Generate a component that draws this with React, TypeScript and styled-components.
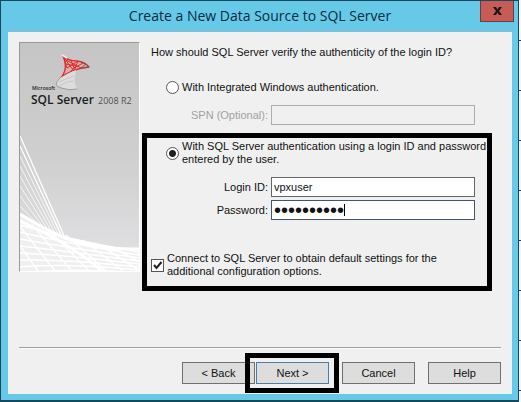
import React from "react";
import styled, { createGlobalStyle } from "styled-components";

const GlobalStyle = createGlobalStyle`
  *, *::before, *::after { box-sizing: border-box; }
  body {
    margin: 0;
    background: #ffffff;
    color: #111111;
    font: 11px/13px "Liberation Sans", Arial, sans-serif;
  }
`;

const Desktop = styled.div`
  display: flex;
`;

const Backdrop = styled.div`
  width: 2px;
  background: repeating-linear-gradient(#f4f8fa 0 40px, #1d4054 40px 41px, #f4f8fa 41px 50px);
`;

const Window = styled.main`
  flex: 1;
  min-width: 0;
  border: 1px solid #17485e;
  border-bottom-width: 2px;
  background: #67c9e8;
  padding: 0 6px 6px 7px;
`;

const TitleBar = styled.header`
  position: relative;
  height: 30px;
  display: flex;
  align-items: center;
  justify-content: center;
`;

const Title = styled.h1`
  margin: 0;
  color: #0c2c42;
  font: 400 14px/20px "Open Sans", "Noto Sans", sans-serif;
`;

const CloseButton = styled.button`
  position: absolute;
  top: 0;
  right: -2px;
  width: 34px;
  height: 21px;
  padding: 0;
  display: grid;
  place-items: center;
  border: 1px solid #6b3d42;
  border-top: 0;
  background: #c75b55;
`;

const Client = styled.form`
  background: #f0f0f0;
  border-top: 1px solid #8fb9c9;
  padding: 10px 11px;
`;

const Content = styled.div`
  display: grid;
  grid-template-columns: 121px minmax(0, 1fr);
  column-gap: 2px;
  align-items: start;
`;

const Banner = styled.div`
  height: 230px;
  border: 1px solid #999999;
  border-right-color: #ffffff;
  border-bottom-color: #ffffff;
  overflow: hidden;
  svg { display: block; width: 100%; height: 100%; }
`;

const Settings = styled.div`
  padding-right: 9px;
`;

const Question = styled.p`
  margin: 0;
  padding: 4px 9px 0;
`;

const WindowsAuth = styled.section`
  display: grid;
  row-gap: 11px;
  padding: 22px 17px 8px 24px;
`;

const Marked = styled.section`
  border: 5px solid #000000;
  padding: 2px 0 8px 4px;
`;

const Choice = styled.label<{ $start?: number; $end?: number }>`
  display: flex;
  align-items: center;
  gap: 3px;
  padding-left: ${(p) => p.$start ?? 0}px;
  padding-right: ${(p) => p.$end ?? 0}px;
`;

const Radio = styled.input.attrs({ type: "radio" })`
  appearance: none;
  flex: none;
  width: 13px;
  height: 13px;
  margin: 0;
  border: 1px solid #555555;
  border-radius: 50%;
  background: #ffffff;
  &:checked {
    background: radial-gradient(circle, #202020 0 3px, #ffffff 4px);
  }
`;

const CheckCell = styled.span`
  position: relative;
  display: grid;
  flex: none;
  width: 13px;
  height: 13px;
  svg { position: absolute; inset: 0; pointer-events: none; }
`;

const Check = styled.input.attrs({ type: "checkbox" })`
  appearance: none;
  margin: 0;
  border: 1px solid #555555;
  background: #ffffff;
  &:not(:checked) + svg { display: none; }
`;

const Field = styled.div<{ $muted?: boolean }>`
  display: grid;
  grid-template-columns: minmax(0, 1fr) 204px;
  column-gap: 3px;
  align-items: center;
  text-align: right;
  color: ${(p) => (p.$muted ? "#a0a0a0" : "inherit")};
`;

const FieldGroup = styled.div`
  display: grid;
  row-gap: 3px;
  padding: 11px 12px 32px 0;
`;

const Entry = styled.span`
  position: relative;
  display: grid;
`;

const TextBox = styled.input<{ $focused?: boolean }>`
  width: 100%;
  height: 20px;
  margin: 0;
  padding: 0 2px;
  border: 1px solid ${(p) => (p.$focused ? "#40566e" : "#666666")};
  border-radius: 0;
  outline: 0;
  background: #ffffff;
  color: #111111;
  font: inherit;
  &[type="password"] { font-size: 20px; }
  &:disabled { background: #f0f0f0; border-color: #adadad; }
`;

const Caret = styled.span`
  position: absolute;
  left: 73px;
  top: 4px;
  width: 1px;
  height: 12px;
  background: #000000;
`;

const Divider = styled.hr`
  margin: 56px 0 13px;
  border: 0;
  border-top: 1px solid #a0a0a0;
  border-bottom: 1px solid #fafafa;
`;

const Actions = styled.footer`
  display: flex;
  justify-content: flex-end;
  gap: 13px;
`;

const Pair = styled.div`
  display: flex;
  gap: 1px;
`;

const Button = styled.button<{ $primary?: boolean }>`
  width: 73px;
  height: 22px;
  padding: 0;
  border: 1px solid ${(p) => (p.$primary ? "#4c7da5" : "#707070")};
  background: #dddddd;
  color: #111111;
  font: inherit;
`;

const Highlight = styled.span`
  position: relative;
  display: grid;
  &::after {
    content: "";
    position: absolute;
    inset: -9px -10px -9px -11px;
    border: 5px solid #000000;
    pointer-events: none;
  }
`;

const rays = Array.from({ length: 8 }, (_, i) => i);

function SqlServerBanner() {
  return (
    <svg viewBox="0 0 119 228" preserveAspectRatio="none" role="img" aria-label="Microsoft SQL Server 2008 R2">
      <defs>
        <linearGradient id="silver" x1="0" y1="0" x2="0" y2="1">
          <stop offset="0" stopColor="#c5c5c5" />
          <stop offset="0.5" stopColor="#cfcfcf" />
          <stop offset="1" stopColor="#e3e3e6" />
        </linearGradient>
        <linearGradient id="flag" x1="0" y1="0" x2="1" y2="0">
          <stop offset="0" stopColor="#dc2626" />
          <stop offset="0.6" stopColor="#dc3432" />
          <stop offset="1" stopColor="#8c4648" />
        </linearGradient>
      </defs>
      <rect width="119" height="228" fill="url(#silver)" />
      <g fill="none" stroke="url(#flag)" strokeLinejoin="round">
        <path d="M43 13 Q48 18 57 18 Q65 19 69 24 Q50 26 40 36 Q49 26 43 13Z" fill="#e79a98" fillOpacity=".6" strokeWidth="1.3" />
        <path d="M44 15 L54 28 L58 18 L47 25 L44 16 L61 25 L66 21 M46 21 L56 23 L49 30 M51 17 L54 25 L63 20" strokeWidth="1" />
      </g>
      <path d="M40 35 Q50 29 56 27 Q53 39 57 46 Q43 47 37 42 Q35 39 40 35Z" fill="#dcdcdc" />
      <path d="M40 35 Q32 43 41 45 Q49 48 57 46" fill="none" stroke="#969696" strokeWidth=".9" />
      <path d="M39 39 Q48 35 54 33 M39 43 Q46 38 54 38" fill="none" stroke="#c2c2c2" strokeWidth=".8" />
      <path d="M42 12 L47 15" stroke="#eeeeee" strokeWidth="1.5" />
      <g fontFamily="Open Sans, sans-serif" fill="#1c1c1c">
        <text x="12" y="47" fontSize="5" fontWeight="600">Microsoft</text>
        <text x="11" y="61" fontSize="12" fontWeight="600">SQL Server</text>
        <text x="78" y="61" fontSize="9" fill="#505050">2008 R2</text>
      </g>
      <path d="M0 171 Q22 185 45 195 Q78 207 119 206 V228 H0Z" fill="#efeff0" />
      <g fill="none" stroke="#ffffff">
        {rays.map((i) => (
          <path key={i} d={`M0 ${93 + i * 10} L${45 - i * 3} ${195 - i}`} strokeWidth={i < 2 ? 1.3 : 0.8} />
        ))}
        <path d="M0 171 Q22 185 45 195 Q78 207 119 206" strokeWidth="3" />
        <path d="M0 178 Q50 200 82 228" strokeWidth="3" />
        {rays.map((i) => (
          <path key={i} d={`M0 ${182 + i * 7} Q45 ${196 + i * 4} 119 ${209 + i * 3}`} strokeWidth="1.5" />
        ))}
        {rays.map((i) => (
          <path key={i} d={`M${i * 17 - 22} ${172 + i * 5} L${i * 17 + 18} 228`} strokeWidth="1.5" />
        ))}
      </g>
    </svg>
  );
}

export default function App() {
  return (
    <>
      <GlobalStyle />
      <Desktop>
        <Window>
          <TitleBar>
            <Title>Create a New Data Source to SQL Server</Title>
            <CloseButton type="button" aria-label="Close">
              <svg width="9" height="8" viewBox="0 0 9 8">
                <path d="M0 0H3L4.5 2.5L6 0H9L6 4L9 8H6L4.5 5.5L3 8H0L3 4Z" fill="#181818" />
              </svg>
            </CloseButton>
          </TitleBar>
          <Client onSubmit={(e) => e.preventDefault()}>
            <Content>
              <Banner><SqlServerBanner /></Banner>
              <Settings>
                <Question>How should SQL Server verify the authenticity of the login ID?</Question>
                <WindowsAuth>
                  <Choice>
                    <Radio name="auth" value="windows" />
                    <span>With Integrated Windows authentication.</span>
                  </Choice>
                  <Field $muted>
                    <label htmlFor="spn">SPN (Optional):</label>
                    <TextBox id="spn" disabled />
                  </Field>
                </WindowsAuth>
                <Marked>
                  <Choice $start={15}>
                    <Radio name="auth" value="sql" defaultChecked />
                    <span>With SQL Server authentication using a login ID and password entered by the user.</span>
                  </Choice>
                  <FieldGroup>
                    <Field>
                      <label htmlFor="login">Login ID:</label>
                      <TextBox id="login" defaultValue="vpxuser" />
                    </Field>
                    <Field>
                      <label htmlFor="password">Password:</label>
                      <Entry>
                        <TextBox id="password" type="password" $focused defaultValue="0123456789" />
                        <Caret />
                      </Entry>
                    </Field>
                  </FieldGroup>
                  <Choice $end={34}>
                    <CheckCell>
                      <Check defaultChecked />
                      <svg viewBox="0 0 13 13">
                        <path d="M3 6L5.5 9L10.5 3" fill="none" stroke="#202020" strokeWidth="2" />
                      </svg>
                    </CheckCell>
                    <span>Connect to SQL Server to obtain default settings for the additional configuration options.</span>
                  </Choice>
                </Marked>
              </Settings>
            </Content>
            <Divider />
            <Actions>
              <Pair>
                <Button type="button">&lt; Back</Button>
                <Highlight><Button type="submit" $primary>Next &gt;</Button></Highlight>
              </Pair>
              <Button type="button">Cancel</Button>
              <Button type="button">Help</Button>
            </Actions>
          </Client>
        </Window>
        <Backdrop />
      </Desktop>
    </>
  );
}
